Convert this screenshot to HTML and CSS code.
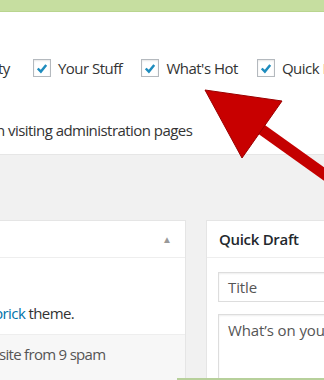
FILE: index.html
```html
<!DOCTYPE html>
<html>
<head>
<meta charset="utf-8">
<link rel="stylesheet" href="styles.css">
</head>
<body>
<div class="page">
  <div class="topbar"></div>
  <div class="options">
    <div class="boxes">
      <span class="cut">ty</span>
      <label class="opt"><span class="cb"><svg viewBox="0 0 17 17" width="17" height="17"><path d="M4 8.5 L7.3 11.8 L13 4.8" fill="none" stroke="#1e8cbe" stroke-width="2.6"/></svg></span>Your Stuff</label>
      <label class="opt"><span class="cb"><svg viewBox="0 0 17 17" width="17" height="17"><path d="M4 8.5 L7.3 11.8 L13 4.8" fill="none" stroke="#1e8cbe" stroke-width="2.6"/></svg></span>What's Hot</label>
      <label class="opt"><span class="cb"><svg viewBox="0 0 17 17" width="17" height="17"><path d="M4 8.5 L7.3 11.8 L13 4.8" fill="none" stroke="#1e8cbe" stroke-width="2.6"/></svg></span>Quick Draft</label>
    </div>
    <p class="note">n visiting administration pages</p>
  </div>
  <div class="dash">
    <div class="panel left">
      <div class="phead"><span class="tri">&#9650;</span></div>
      <div class="pbody">
        <p class="theme"><a class="lnk">brick</a> theme.</p>
      </div>
      <div class="pfoot">site from 9 spam</div>
    </div>
    <div class="panel right">
      <div class="phead"><h2>Quick Draft</h2></div>
      <div class="pbody form">
        <div class="input">Title</div>
        <div class="textarea">What’s on your mind?</div>
      </div>
    </div>
  </div>
  <div class="toast"></div>
  <svg class="arrow" width="324" height="380" viewBox="0 0 324 380">
    <line x1="240" y1="114" x2="345" y2="189" stroke="#c40000" stroke-width="11"/>
    <polygon points="205,90 282,101 242,158" fill="#c80000" stroke="#9a0000" stroke-width="1"/>
  </svg>
</div>
</body>
</html>
```
FILE: styles.css
```css
html, body {
  margin: 0;
  padding: 0;
}
body {
  font-family: "Open Sans", "Noto Sans", sans-serif;
  color: #333;
  background: #f1f1f1;
  overflow: hidden;
}
.page {
  position: relative;
  width: 324px;
  height: 380px;
  overflow: hidden;
}
.topbar {
  height: 11px;
  background: #c6dea0;
  border-bottom: 1px solid #b9d58f;
  box-shadow: 0 1px 2px rgba(180, 210, 140, 0.3);
}
.options {
  background: #fff;
  height: 143px;
  border-bottom: 1px solid #e6e6e6;
  box-sizing: border-box;
}
.boxes {
  display: flex;
  align-items: center;
  white-space: nowrap;
  padding-top: 46px;
  height: 20px;
  font-size: 15px;
  letter-spacing: -0.5px;
}
.cut {
  margin-left: -2px;
}
.opt {
  display: flex;
  align-items: center;
  margin-left: 19px;
}
.cut + .opt {
  margin-left: 23px;
}
.cb {
  width: 16px;
  height: 16px;
  border: 1px solid #b4b9be;
  background: #fff;
  box-shadow: inset 0 1px 2px rgba(0, 0, 0, 0.1);
  margin-right: 7px;
  display: flex;
  align-items: center;
  justify-content: center;
}
.cb svg {
  display: block;
}
.note {
  margin: 42px 0 0 -4px;
  font-size: 15px;
  letter-spacing: -0.55px;
  white-space: nowrap;
}
.dash {
  display: flex;
  gap: 20px;
  padding-top: 65px;
}
.panel {
  background: #fff;
  border: 1px solid #e5e5e5;
  box-sizing: border-box;
  flex-shrink: 0;
}
.left {
  width: 187px;
  margin-left: -1px;
}
.right {
  width: 150px;
}
.phead {
  height: 36px;
  border-bottom: 1px solid #eee;
  display: flex;
  align-items: center;
  position: relative;
}
.tri {
  position: absolute;
  right: 13px;
  top: 11px;
  font-size: 10px;
  color: #999;
}
.phead h2 {
  margin: 0 0 0 12px;
  font-size: 15px;
  font-weight: 600;
  color: #23282d;
  letter-spacing: -0.3px;
}
.left .pbody {
  height: 76px;
}
.theme {
  margin: 0;
  padding-top: 45px;
  font-size: 15px;
  letter-spacing: -0.6px;
  white-space: nowrap;
}
.lnk {
  color: #0073aa;
  margin-left: -6px;
}
.pfoot {
  height: 50px;
  background: #f7f7f7;
  border-top: 1px solid #eee;
  font-size: 15px;
  letter-spacing: -0.7px;
  color: #555;
  padding-top: 9px;
  box-sizing: border-box;
  white-space: nowrap;
  margin-left: -1px;
}
.form {
  padding: 14px 0 0 11px;
}
.input, .textarea {
  border: 1px solid #ddd;
  box-shadow: inset 0 1px 2px rgba(0, 0, 0, 0.07);
  font-size: 15px;
  letter-spacing: -0.1px;
  color: #555;
  padding-left: 9px;
  white-space: nowrap;
  box-sizing: border-box;
}
.input {
  height: 30px;
  line-height: 28px;
}
.textarea {
  margin-top: 12px;
  height: 80px;
  padding-top: 5px;
}
.toast {
  position: absolute;
  left: 177px;
  top: 378px;
  width: 160px;
  height: 4px;
  background: #b7d09b;
}
.arrow {
  position: absolute;
  left: 0;
  top: 0;
}
```
